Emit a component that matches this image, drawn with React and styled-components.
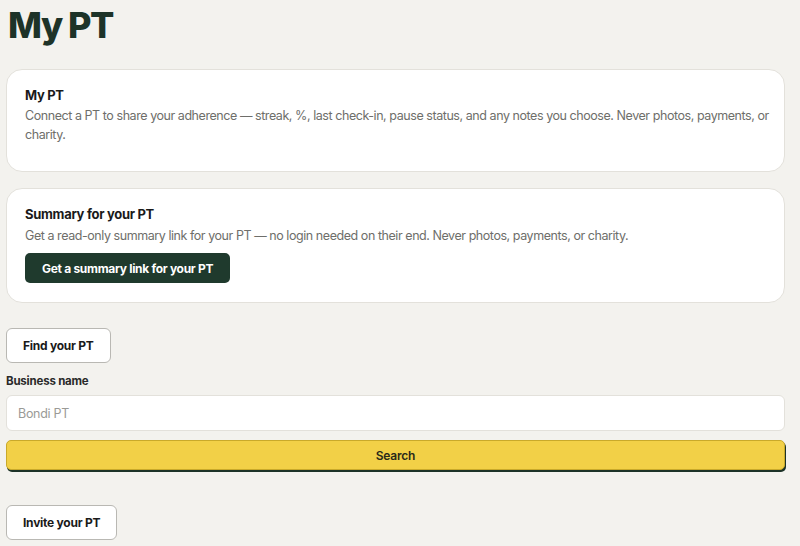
import React from "react";
import styled, { createGlobalStyle } from "styled-components";

const Global = createGlobalStyle`
  html, body { margin: 0; padding: 0; background: #f3f2ee; }
  body { font-family: Inter, "Noto Sans", sans-serif; color: #1a1a1a; }
  * { box-sizing: border-box; }
`;

const Page = styled.div`
  width: 779px;
  margin-left: 6px;
  padding-top: 4px;
  display: flex;
  flex-direction: column;
`;

const Heading = styled.h1`
  margin: 0 0 23px 2px;
  font-size: 36px;
  line-height: 42px;
  font-weight: 800;
  letter-spacing: -1.5px;
  color: #1d3328;
`;

const Card = styled.section`
  background: #fff;
  border: 1px solid #e3e1db;
  border-radius: 16px;
  padding: 15px 12px ${(p) => p.$pb || 18}px 18px;
  margin-bottom: ${(p) => p.$mb || 16}px;
  display: flex;
  flex-direction: column;
  align-items: flex-start;
`;

const CardTitle = styled.h2`
  margin: 0;
  font-size: 13px;
  line-height: 20px;
  font-weight: 700;
  letter-spacing: -0.3px;
  color: #1a1a1a;
`;

const CardText = styled.p`
  margin: ${(p) => (p.$tight ? "2px" : "1px")} 0 0;
  font-size: 12.5px;
  line-height: 19px;
  letter-spacing: -0.44px;
  color: #6e6e6a;
`;

const DarkButton = styled.button`
  margin-top: 8px;
  height: 30px;
  padding: 0 17px;
  border: none;
  border-radius: 5px;
  background: #1f3a2d;
  color: #fff;
  font-family: inherit;
  font-size: 12px;
  font-weight: 700;
  letter-spacing: -0.3px;
`;

const OutlineButton = styled.button`
  align-self: flex-start;
  height: 35px;
  padding: 0 16px;
  background: #fff;
  border: 1px solid #b9b8b3;
  border-radius: 6px;
  font-family: inherit;
  font-size: 12px;
  font-weight: 700;
  letter-spacing: -0.25px;
  color: #1a1a1a;
  margin-top: ${(p) => p.$mt || 0}px;
`;

const Label = styled.label`
  margin-top: 11px;
  font-size: 11.5px;
  line-height: 14px;
  font-weight: 700;
  letter-spacing: -0.2px;
  color: #2a2a2a;
`;

const Input = styled.input`
  margin-top: 7px;
  height: 36px;
  width: 100%;
  border: 1px solid #e3e1db;
  border-radius: 6px;
  background: #fff;
  padding: 0 11px;
  font-family: inherit;
  font-size: 12.5px;
  letter-spacing: -0.3px;
  color: #1a1a1a;
  &::placeholder { color: #9a9a96; }
`;

const SearchButton = styled.button`
  margin-top: 9px;
  height: 30px;
  width: 100%;
  background: #f2d047;
  border: 1px solid #c9a92a;
  border-radius: 5px;
  box-shadow: 1px 2px 0 #1d3328;
  font-family: inherit;
  font-size: 12px;
  font-weight: 600;
  letter-spacing: -0.2px;
  color: #2a2a1a;
`;

export default function App() {
  return (
    <>
      <Global />
      <Page>
        <Heading>My PT</Heading>
        <Card $pb={27}>
          <CardTitle>My PT</CardTitle>
          <CardText>
            Connect a PT to share your adherence — streak, %, last check-in, pause status, and any notes you choose. Never photos, payments, or charity.
          </CardText>
        </Card>
        <Card $pb={19} $mb={25}>
          <CardTitle>Summary for your PT</CardTitle>
          <CardText $tight>
            Get a read-only summary link for your PT — no login needed on their end. Never photos, payments, or charity.
          </CardText>
          <DarkButton>Get a summary link for your PT</DarkButton>
        </Card>
        <OutlineButton>Find your PT</OutlineButton>
        <Label>Business name</Label>
        <Input placeholder="Bondi PT" />
        <SearchButton>Search</SearchButton>
        <OutlineButton $mt={35}>Invite your PT</OutlineButton>
      </Page>
    </>
  );
}
